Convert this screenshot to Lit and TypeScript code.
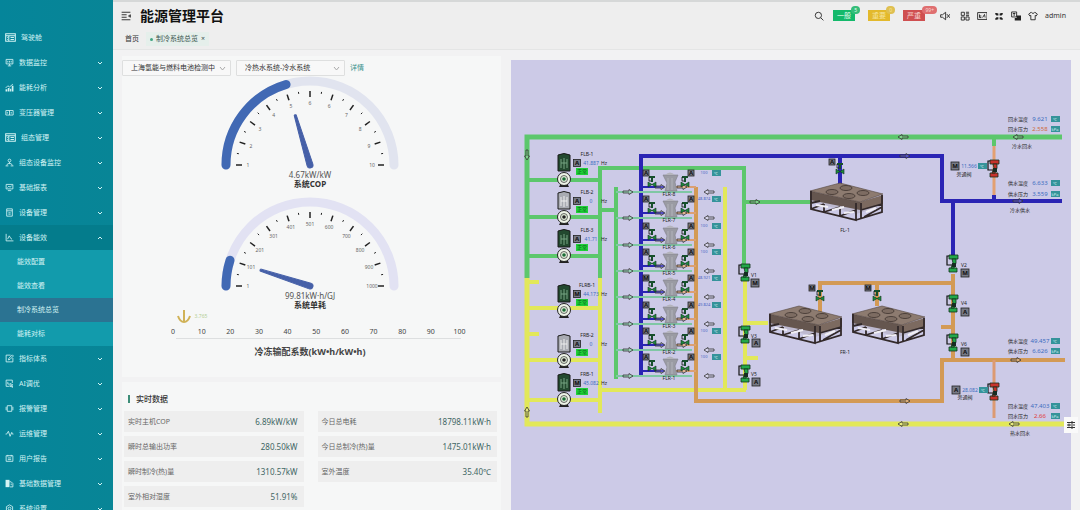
import { LitElement, html, css, svg } from "lit";
import { customElement } from "lit/decorators.js";
import { classMap } from "lit/directives/class-map.js";

type Glyph = ReturnType<typeof svg>;

const ICONS: Record<string, Glyph> = {
  board: svg`<path d="M1 2.5h14v11H1z M1 5.5h14 M5.5 5.5v8 M8 8h5 M8 11h5 M3 8h1 M3 11h1"/>`,
  monitor: svg`<path d="M2 2.5h12v8H2z M8 10.5v3 M5 14h6 M5 5v3 M8 5v3 M11 5v3"/>`,
  trend: svg`<path d="M1 9l4-4 3 2 6-5" /><path class="solid" d="M1 11h3v4H1z M5 9h3v6H5z M9 10h2v5H9z M12 5h3v10h-3z"/>`,
  box: svg`<path d="M1.5 4.5h13v8h-13z M8 4.5v8 M4 7v3 M11 7v3"/>`,
  nodes: svg`<path d="M8 2a2.5 2.5 0 1 1 0 5a2.5 2.5 0 1 1 0-5 M8 7v3 M3 13l2-3h6l2 3 M1 14h5 M10 14h5"/>`,
  report: svg`<path d="M2 2.5h12v8H2z M5 13.5h6 M4.5 8l2.5-2.5 2 2 3-3"/>`,
  device: svg`<path d="M3 1.5h10v13H3z M3 5h10 M6 8.5h4 M6 11h4"/>`,
  chart: svg`<path d="M2 1.5v12.5h13 M4.5 11l3-6 3 5 2 1"/>`,
  edit: svg`<path d="M14 7v7H2V2h8 M6 10.5l1-3L13 1.5l2 2L9 9.5z"/>`,
  tune: svg`<path d="M2 2h11v5 M2 2v11h5 M5 5v4h3 M9 8l5 2.5-2.5 1L14 14l-1.5 1-2-3L9 14z"/>`,
  alarm: svg`<path d="M4 3h8v10H4z M2 5v6 M14 5v6"/>`,
  pulse: svg`<path d="M1 9h2l3-5 3 9 3-7 1 3h2"/>`,
  user: svg`<path d="M2 3h12v10H2z M5 1.5v3 M11 1.5v3 M5 7h6 M5 10h6"/>`,
  data: svg`<path class="solid" d="M1 1.5h7v13H1z"/><path d="M8 5h3l3 3v6H9 M11 8v3"/>`,
  gear: svg`<path d="M8 1.5l5.5 3.2v6.5L8 14.5 2.5 11.2V4.7z M8 5.5a2.5 2.5 0 1 1 0 5a2.5 2.5 0 1 1 0-5"/>`,
  search: svg`<path d="M7 2a5 5 0 1 1 0 10a5 5 0 1 1 0-10 M11 11l4 4"/>`,
  mute: svg`<path d="M1 6v4h3l5 4V2L4 6z M11 5l5 6 M16 5l-5 6"/>`,
  qr: svg`<path d="M2 2h5v5H2z M2 9.5h5v5H2z M9.5 9.5h5v5h-5z M9.5 2h5 M9.5 4.5h5 M9.5 7h5"/>`,
  media: svg`<path d="M1 2.5h15v11H1z M4 5.5v5h3 M4 8h3 M9 10.5l3-5 1 5"/>`,
  full: svg`<path class="solid" d="M2 3h2l3 1v3H4L2 5z M14 3h-2L9 4v3h3l2-2z M2 14h2l3-1v-3H4l-2 2z M14 14h-2l-3-1v-3h3l2 2z"/>`,
  lang: svg`<path d="M1 1.5h8v8H1z M3 4h4 M5 3v5"/><path class="solid" d="M9 7h7v8H6v-4h3z"/>`,
  shirt: svg`<path d="M5 2l-4 3 2 3 1.5-1V14h7V7L13 8l2-3-4-3-1.5 1.5h-3z"/>`,
};

const icon = (name: string) =>
  html`<svg class="icon" viewBox="0 0 16 16" aria-hidden="true">${ICONS[name]}</svg>`;

interface MenuItem {
  icon: string;
  text: string;
  leaf?: boolean;
  children?: string[];
}

const MENU: MenuItem[] = [
  { icon: "board", text: "驾驶舱", leaf: true },
  { icon: "monitor", text: "数据监控" },
  { icon: "trend", text: "能耗分析" },
  { icon: "box", text: "变压器管理" },
  { icon: "board", text: "组态管理" },
  { icon: "nodes", text: "组态设备监控" },
  { icon: "report", text: "基础报表" },
  { icon: "device", text: "设备管理" },
  { icon: "chart", text: "设备能效", children: ["能效配置", "能效查看", "制冷系统总览", "能耗对标"] },
  { icon: "edit", text: "指标体系" },
  { icon: "tune", text: "AI调优" },
  { icon: "alarm", text: "报警管理" },
  { icon: "pulse", text: "运维管理" },
  { icon: "user", text: "用户报告" },
  { icon: "data", text: "基础数据管理" },
  { icon: "gear", text: "系统设置" },
];

const fontStack = css`"Noto Sans", "Noto Sans CJK SC", sans-serif`;

@customElement("side-menu")
class SideMenu extends LitElement {
  static styles = css`
    :host { display: block; background: linear-gradient(90deg, #05859a, #088596); overflow: hidden; padding-top: 25px; color: #d3f3f4; font: 7px/10px ${fontStack}; }
    ul { list-style: none; margin: 0; padding: 0; }
    button { display: flex; align-items: center; gap: 5px; width: 100%; height: 25px; padding: 0 10px 0 5px; border: 0; background: none; color: inherit; font: inherit; text-align: left; }
    .open { background: #047c8c; }
    .text { flex: 1; }
    .icon { width: 9px; height: 9px; fill: none; stroke: currentColor; stroke-width: 1.5; }
    .wide .icon { width: 11px; height: 11px; }
    .solid { fill: currentColor; stroke: none; }
    .chev { width: 6px; height: 4px; fill: none; stroke: currentColor; stroke-width: 1; }
    .sub { background: #129bac; }
    a { display: flex; align-items: center; height: 24px; padding-left: 17px; color: inherit; text-decoration: none; }
    .current { background: #2b7392; }
  `;

  render() {
    return html`<nav><ul>
      ${MENU.map((m) => html`<li>
        <button class=${classMap({ open: !!m.children, wide: m.icon === "board" })}>
          ${icon(m.icon)}<span class="text">${m.text}</span>
          ${m.leaf ? "" : html`<svg class="chev" viewBox="0 0 6 4"><path d=${m.children ? "M1 3l2-2 2 2" : "M1 1l2 2 2-2"} /></svg>`}
        </button>
        ${m.children ? html`<ul class="sub">${m.children.map((c) => html`<li><a href="#" class=${classMap({ current: c === "制冷系统总览" })}>${c}</a></li>`)}</ul>` : ""}
      </li>`)}
    </ul></nav>`;
  }
}

@customElement("top-bar")
class TopBar extends LitElement {
  static styles = css`
    :host { display: block; background: #eeeeee; border-top: 2px solid #d6d8d8; border-bottom: 1px solid #e4e5e5; font: 7px/10px ${fontStack}; color: #333; }
    .bar { display: flex; align-items: center; height: 27px; padding: 0 14px 0 8px; }
    h1 { margin: 0 auto 0 9px; font-size: 14px; line-height: 20px; font-weight: 700; color: #111; }
    .tools { display: flex; align-items: center; gap: 7px; }
    button { display: block; padding: 0; border: 0; background: none; color: #222; font: inherit; }
    .icon { display: block; width: 10px; height: 10px; fill: none; stroke: currentColor; stroke-width: 1.4; }
    .solid { fill: currentColor; stroke: none; }
    .level { position: relative; width: 22px; height: 11px; color: #e9fff2; text-align: center; background: #14b96b; margin-right: 6px; }
    .search { margin-right: 2px; }
    .mute { margin-right: 3px; }
    .warn { background: #e3b92c; color: #f6e49d; }
    .bad { background: #cf4f50; color: #f8d5d0; margin-right: 8px; }
    .count { position: absolute; right: -5px; top: -4px; min-width: 9px; box-sizing: border-box; height: 8px; padding: 0 2px; border-radius: 4px; background: #35bd78; font-size: 5px; line-height: 8px; }
    .warn .count { background: #dfc051; }
    .bad .count { background: #df6f70; right: -12px; padding: 0 3px; }
    .tabs { display: flex; align-items: center; gap: 3px; height: 20px; padding-left: 8px; }
    .tab { padding: 0 4px; height: 14px; line-height: 14px; }
    .tab.on { display: flex; align-items: center; gap: 3px; background: #e5efeb; color: #3c5750; }
    .dot { width: 3px; height: 3px; border-radius: 50%; background: #42a583; }
  `;

  render() {
    return html`
      <div class="bar">
        <button aria-label="折叠菜单"><svg class="icon" viewBox="0 0 16 16"><path d="M1 2h14 M1 6h8 M1 10h8 M1 14h14 M15 6l-3 2 3 2z" /></svg></button>
        <h1>能源管理平台</h1>
        <div class="tools">
          <button class="search" aria-label="搜索">${icon("search")}</button>
          <button class="level">一般<span class="count">5</span></button>
          <button class="level warn">重要<span class="count">0</span></button>
          <button class="level bad">严重<span class="count">99+</span></button>
          ${["mute", "qr", "media", "full", "lang", "shirt"].map((n) => html`<button class=${n} aria-label=${n}>${icon(n)}</button>`)}
          <span>admin</span>
        </div>
      </div>
      <div class="tabs"><span class="tab">首页</span><span class="tab on"><i class="dot"></i>制冷系统总览<span>×</span></span></div>`;
  }
}

const polar = (r: number, deg: number) => {
  const a = (deg * Math.PI) / 180;
  return [-r * Math.cos(a), -r * Math.sin(a)];
};

const gauge = (ratio: number, labels: string[], value: string, name: string, track: string) => {
  const end = polar(84, ratio * 180);
  return html`<svg class="gauge" viewBox="0 0 379 113" role="img" aria-label=${name}>
    <g transform="translate(188 89)">
      <path d="M-84 0A84 84 0 0 1 84 0" fill="none" stroke=${track} stroke-width="9" stroke-linecap="round" />
      <path d="M-84 0A84 84 0 0 1 ${end[0]} ${end[1]}" fill="none" stroke="#4169b4" stroke-width="9" stroke-linecap="round" />
      ${Array.from({ length: 21 }, (_, i) => {
        const major = i % 2 === 0;
        const a = polar(74, i * 9);
        const b = polar(major ? 68 : 72, i * 9);
        return svg`<line x1=${a[0]} y1=${a[1]} x2=${b[0]} y2=${b[1]} stroke="#222" stroke-width=${major ? 1.5 : 1} />`;
      })}
      ${labels.map((l, i) => {
        const p = polar(62, i * 18);
        return svg`<text class="tick" x=${p[0]} y=${p[1] + 2}>${l}</text>`;
      })}
      <path transform="rotate(${ratio * 180 - 90})" d="M-3 0L-1 -52Q0 -53 1 -52L3 0A3 3 0 0 1 -3 0z" fill="#4660a8" stroke="#4660a8" />
      <text class="value" x="0" y="13">${value}</text>
      <text class="name" x="0" y="22">${name}</text>
    </g>
  </svg>`;
};

const METRICS = [
  ["实时主机COP", "6.89kW/kW"], ["今日总电耗", "18798.11kW·h"],
  ["瞬时总输出功率", "280.50kW"], ["今日总制冷(热)量", "1475.01kW·h"],
  ["瞬时制冷(热)量", "1310.57kW"], ["室外温度", "35.40℃"],
  ["室外相对湿度", "51.91%"],
];

@customElement("energy-panel")
class EnergyPanel extends LitElement {
  static styles = css`
    :host { display: flex; flex-direction: column; gap: 5px; font: 7px/10px ${fontStack}; color: #444; }
    .card { background: #f6f7f7; }
    .charts { padding: 4px 0 10px; }
    .filters { display: flex; align-items: center; gap: 5px; }
    .pick { position: relative; flex: 0 0 109px; }
    select { display: block; width: 100%; height: 16px; padding: 0 14px 0 8px; appearance: none; border: 1px solid #dedfdf; border-radius: 1px; background: #f8f8f8; color: #333; font: inherit; }
    .chev { position: absolute; right: 5px; top: 6px; width: 7px; height: 5px; fill: none; stroke: #aaa; pointer-events: none; }
    a { color: #36918c; text-decoration: none; }
    .gauge, .axis { display: block; width: 100%; overflow: visible; }
    .gauge + .gauge { margin-top: 8px; }
    text { text-anchor: middle; }
    .tick { font-size: 5px; fill: #666; }
    .value { font-size: 8px; fill: #555; }
    .name { font-size: 8px; font-weight: 700; fill: #333; }
    .num { font-size: 7px; fill: #444; }
    .title { font-size: 9px; font-weight: 700; fill: #444; }
    .mark { font-size: 5px; fill: #b5cf95; }
    .data { flex: 1; padding: 11px 4px 0 2px; }
    h2 { margin: 2px 0 0 4px; padding-left: 6px; border-left: 2px solid #3d8d78; font-size: 8px; line-height: 8px; font-weight: 500; color: #333; }
    dl { display: grid; grid-template-columns: 1fr 1fr; gap: 4px 14px; margin: 8px 0 0; }
    .row { display: flex; justify-content: space-between; align-items: center; height: 21px; padding: 0 6px 0 4px; background: #eeeeee; color: #666; }
    dd { margin: 0; font-size: 8px; color: #3f6664; }
  `;

  private pick(id: string, text: string) {
    return html`<div class="pick"><select id=${id} aria-label=${id}><option>${text}</option></select><svg class="chev" viewBox="0 0 7 5"><path d="M1 1l2.5 3L6 1" /></svg></div>`;
  }

  render() {
    return html`
      <section class="card charts">
        <div class="filters">
          ${this.pick("站点", "上海氢能与燃料电池检测中")}
          ${this.pick("系统", "冷热水系统-冷水系统")}
          <a href="#">详情</a>
        </div>
        ${gauge(0.408, ["1", "2", "3", "4", "5", "6", "6", "7", "8", "9", "10"], "4.67kW/kW", "系统COP", "#e1e4ef")}
        ${gauge(0.099, ["1", "101", "201", "301", "401", "501", "600", "700", "800", "900", "1000"], "99.81kW·h/GJ", "系统单耗", "#e2e2f3")}
        <svg class="axis" viewBox="0 0 379 57" role="img" aria-label="冷冻输配系数">
          <path d="M62 0v12 M56 6q2 6 6 6q4 0 6-6" fill="none" stroke="#d0b257" stroke-width="2" />
          <text class="mark" x="79" y="8">3.765</text>
          ${Array.from({ length: 11 }, (_, i) => svg`<text class="num" x=${51 + i * 28.65} y="24">${i * 10}</text>`)}
          <line x1="54" y1="28.5" x2="339" y2="28.5" stroke="#dddfe0" />
          <text class="title" x="188" y="45">冷冻输配系数(kW•h/kW•h)</text>
        </svg>
      </section>
      <section class="card data">
        <h2>实时数据</h2>
        <dl>${METRICS.map(([k, v]) => html`<div class="row"><dt>${k}</dt><dd>${v}</dd></div>`)}</dl>
      </section>`;
  }
}

const GREEN = "#5cc76c", BLUE = "#2a24b4", ORANGE = "#d39a55", YELLOW = "#e2e85a";

const pipe = (points: string, color: string, w = 4) =>
  svg`<polyline points=${points} fill="none" stroke=${color} stroke-width=${w} />`;

const arrow = (x: number, y: number, turn = 0) =>
  svg`<path transform="translate(${x} ${y}) rotate(${turn})" d="M-5 -1H1V-2.5L5 0L1 2.5V1H-5z" fill="#fff" fill-opacity=".2" stroke="#333" stroke-width=".8" />`;

const flag = (x: number, y: number, t: string, s = 7) =>
  svg`<rect x=${x - s / 2} y=${y - s / 2} width=${s} height=${s} fill="#777a86" stroke="#222" stroke-width=".8" /><text class="flag" x=${x} y=${y + 2}>${t}</text>`;

const unit = (x: number, y: number, t: string) =>
  svg`<rect x=${x - 4} y=${y - 3} width="9" height="6" fill="#35939a" /><text class="unit" x=${x} y=${y + 2}>${t}</text>`;

const valve = (x: number, y: number, color = "#23a84a") => svg`<g transform="translate(${x} ${y})">
  <path d="M-4 -8H5V-4H-4z M-4 5H4V9H-4z" fill=${color} stroke="#12301c" stroke-width=".8" />
  <path d="M-1 -4H3V0L1 5H-2L0 0z" fill=${color} stroke="#12301c" stroke-width=".8" />
  <path d="M-1 0h4v4h-4z" fill="#162c22" /><path d="M-4 -7H-6V2H-1" fill="none" stroke="#111" stroke-width="1.2" /></g>`;

const smallValve = (x: number, y: number) => svg`<g transform="translate(${x} ${y})">
  <path d="M-3 -5H3V-3H-3z M-1 -3h2v4h-2z" fill="#174f2c" /><path d="M-4 1L4 6V1L-4 6z" fill="#1d8a3c" stroke="#12301c" stroke-width=".6" /><path d="M-3 -4v4h2" fill="none" stroke="#111" stroke-width=".8" /></g>`;

const pump = (y: number, name: string, mode: string, value: string, on: boolean) => svg`<g transform="translate(564 ${y})">
  <path d="M-6 -24Q0 -27 6 -24V-8H-6z" fill=${on ? "#23492f" : "#a9abb2"} stroke="#1a1a1a" />
  <path d="M-3 -20v9 M0 -21v11 M3 -20v9 M-3 -16h6" stroke=${on ? "#79a684" : "#eee"} fill="none" />
  <path d="M-5 8h10l-2-4h-6z" fill="#222" />
  <circle r="6.5" fill="#eef4e8" stroke="#222" /><circle r="3.5" fill="#e3eedb" stroke="#444" stroke-width=".8" /><circle r="1.8" fill=${on ? "#1b6c36" : "#222"} />
  <text class="tag" x="23" y="-23">${name}</text>
  ${flag(13, -16, mode, 7)}
  <text class="meter" x="27" y="-14">${value}</text><text class="tag" x="40" y="-14">Hz</text>
  <rect x="12" y="-11" width="12" height="7" fill="#1fd238" /><text class="state" x="18" y="-6">正常</text></g>`;

const tower = (y: number, n: number, mode: string, value: string) => svg`<g transform="translate(0 ${y})">
  ${pipe("616,4 692,4", "#7fc7a4", 2)}
  ${pipe("641,-1 664,-1", BLUE, 2)}${pipe("676,-1 696,-1", "#dba074", 2)}
  ${arrow(628, 4)}${arrow(709, 4, 180)}${arrow(660, -1)}${arrow(682, -1)}
  <path d="M663 -13H678L675 -6L677 3H665L667 -5z" fill="#9a9ba3" stroke="#7f8089" stroke-width=".6" /><path d="M665 -13q5-5 10 0z" fill="#b4b4bc" /><path d="M668 -10v12 M672 -10v12" stroke="#b9bac2" stroke-width=".8" />
  ${smallValve(652, -7)}${smallValve(685, -7)}
  ${flag(646, -15, mode, 6)}${flag(691, -15, "A", 6)}
  <text class="small" x="704" y="-14">${value}</text>${unit(716, -15, "℃")}
  <text class="tag" x="669" y="8">FLR-${n}</text></g>`;

const chiller = (x: number, y: number) => svg`<g transform="translate(${x} ${y})">
  <path d="M0 18L46 31L73 23L30 14z" fill="#bdb9cf" />
  <path d="M0 8L50 19V27L0 17z" fill="#65564f" /><path d="M50 19L73 12V21L50 27z" fill="#7c6a60" />
  <path d="M0 8L30 0L73 11L50 19z" fill="#8d7b70" stroke="#54463f" stroke-width=".6" />
  <g fill="#7d6c62" stroke="#4d413b" stroke-width="1"><ellipse cx="22" cy="9" rx="6" ry="2.5" /><ellipse cx="36" cy="5" rx="6" ry="2.5" /><ellipse cx="39" cy="13" rx="6" ry="2.5" /><ellipse cx="53" cy="10" rx="6" ry="2.5" /></g>
  <path d="M1 8V26L46 37V20 M46 37L72 29V12 M1 20L10 18 M14 29V21 M30 33V24 M1 26L14 21 M14 29L30 24 M30 33L46 27 M51 35V20 M51 27L72 21 M54 34L72 24" fill="none" stroke="#32292a" stroke-width="1.8" />
  <path d="M6 22l12 2 M22 27l12-3 M34 30l10-1 M56 29l10-4" stroke="#f1eff5" stroke-width="2" /></g>`;

const reading = (y: number, label: string, value: string, u: string, cls = "read") =>
  svg`<text class="label" x="1018" y=${y + 2}>${label}</text><text class=${cls} x="1040" y=${y + 2}>${value}</text>${unit(1055, y, u)}`;

@customElement("system-diagram")
class SystemDiagram extends LitElement {
  static styles = css`
    :host { display: block; background: #cccae7; font: 5px/6px ${fontStack}; }
    svg { display: block; width: 100%; overflow: visible; }
    text { text-anchor: middle; fill: #222; font-size: 5px; }
    .flag { font-weight: 700; fill: #111; font-size: 6px; }
    .read { font-size: 6px; fill: #3b6cc0; }
    .meter { fill: #3b6cc0; }
    .hot { font-size: 6px; fill: #cf6a3c; }
    .alert { font-size: 6px; fill: #e03a3a; }
    .small { font-size: 4px; fill: #4a66c4; }
    .unit { font-size: 4px; fill: #d6f2f2; }
    .state { fill: #0a5a18; }
  `;

  render() {
    const modes = ["A", "A", "A", "A", "M", "A", "A", "A"];
    const temps = ["100", "48.874", "100", "100", "48.921", "49.824", "100", "100"];
    return html`<svg viewBox="511 60 560 450" role="img" aria-label="制冷系统流程图">
      ${pipe("1062,137 527,137 527,278", GREEN, 5)}
      ${[180, 217, 256].map((y) => pipe(`527,${y} 600,${y}`, GREEN))}
      ${pipe("600,278 600,168 744,168 744,264", GREEN)}
      ${pipe("744,202 811,202", GREEN)}
      ${pipe("600,210 616,210", GREEN)}${pipe("616,187 616,379", GREEN)}
      ${pipe("641,376 641,156 942,156 942,201 1062,201", BLUE)}
      ${pipe("840,156 840,184", BLUE)}${pipe("953,201 953,256", BLUE)}
      ${pipe("527,278 527,424 1066,424", YELLOW, 5)}
      ${pipe("600,278 600,413", YELLOW)}
      ${[308, 360, 400].map((y) => pipe(`527,${y} 600,${y}`, YELLOW))}
      ${pipe("527,282 539,282", YELLOW)}${pipe("527,334 539,334", YELLOW)}
      ${pipe("600,390 746,390", YELLOW)}${pipe("725,187 725,390", YELLOW)}
      ${pipe("745,280 745,390", YELLOW)}${pipe("745,323 768,323", YELLOW)}${pipe("745,358 758,358", YELLOW)}
      ${pipe("696,187 696,401 942,401 942,360 1065,360", ORANGE)}
      ${pipe("820,315 820,283 953,283", ORANGE)}${pipe("877,283 877,306", ORANGE)}
      ${pipe("953,274 953,360", ORANGE)}${pipe("941,327 953,327", ORANGE)}
      ${pipe("994,139 994,198", "#e3a071", 3)}${pipe("994,139 994,146", GREEN)}${pipe("994,195 994,201", BLUE)}
      ${pipe("994,360 994,418", "#dc9a72", 3)}

      ${pump(179, "FLB-1", "A", "41.887", true)}
      ${pump(217, "FLB-2", "A", "0", false)}
      ${pump(255, "FLB-3", "A", "41.71", true)}
      ${pump(310, "FLRB-1", "M", "44.173", true)}
      ${pump(360, "FRB-2", "A", "0", false)}
      ${pump(399, "FRB-1", "M", "45.082", true)}

      ${modes.map((m, i) => tower(188 + Math.round(i * 26.3), 8 - i, m, temps[i]))}

      ${chiller(810, 183)}${chiller(769, 306)}${chiller(852, 306)}
      <text x="845" y="232">FL-1</text><text x="845" y="354">FR-1</text>
      ${smallValve(840, 168)}${flag(832, 162, "A", 6)}
      ${smallValve(820, 295)}${flag(812, 288, "M", 6)}
      ${smallValve(877, 295)}${flag(868, 288, "M", 6)}

      ${valve(745, 272)}<text x="754" y="277">V1</text>${flag(755, 283, "M", 8)}
      ${valve(745, 334)}<text x="754" y="338">V3</text>${flag(756, 343, "A", 8)}
      ${valve(745, 373)}<text x="754" y="376">V5</text>${flag(756, 382, "A", 8)}
      ${valve(953, 263)}<text x="964" y="267">V2</text>${flag(965, 273, "M", 8)}
      ${valve(953, 303)}<text x="964" y="305">V4</text>${flag(965, 312, "A", 8)}
      ${valve(953, 342)}<text x="964" y="346">V6</text>${flag(965, 352, "A", 8)}
      ${valve(994, 168, "#c8332c")}${valve(994, 391, "#c8332c")}

      ${flag(955, 166, "M", 8)}<text class="meter" x="969" y="168">11.566</text>${unit(982, 166, "℃")}<text x="964" y="176">旁通阀</text>
      ${flag(956, 390, "A", 8)}<text class="meter" x="970" y="392">28.082</text>${unit(983, 390, "℃")}<text x="965" y="399">旁通阀</text>

      ${reading(119, "回水温度", "9.621", "℃")}${reading(129, "回水压力", "2.558", "kPa", "hot")}
      <text x="1022" y="148">冷水回水</text>
      ${reading(183, "供水温度", "6.633", "℃")}${reading(194, "供水压力", "3.559", "kPa")}
      <text x="1020" y="212">冷水供水</text>
      ${reading(341, "供水温度", "49.457", "℃")}${reading(351, "供水压力", "6.626", "kPa")}
      ${reading(406, "回水温度", "47.403", "℃")}${reading(416, "回水压力", "2.66", "kPa", "alert")}
      <text x="1020" y="435">热水回水</text>

      ${arrow(527, 155, 90)}${arrow(527, 412, -90)}${arrow(755, 202)}
      ${arrow(903, 137, 180)}${arrow(905, 156)}${arrow(1018, 137, 180)}${arrow(1018, 201)}
      ${arrow(905, 401)}${arrow(903, 424, 180)}${arrow(1016, 360)}${arrow(1014, 424, 180)}
    </svg>`;
  }
}

@customElement("app-root")
class AppRoot extends LitElement {
  static styles = css`
    :host { display: grid; grid-template-columns: 113px minmax(0, 1fr); height: 100vh; overflow: hidden; background: #f0f0f0; }
    main { display: flex; flex-direction: column; min-width: 0; min-height: 0; }
    .content { flex: 1; min-height: 0; display: grid; grid-template-columns: 379fr 560fr; gap: 10px; padding: 6px 9px 0; background: #f2f2f3; }
    system-diagram { margin-top: 4px; }
    .settings { position: fixed; right: 2px; top: 417px; width: 14px; height: 16px; padding: 0; border: 0; background: #fafafa; display: grid; place-items: center; }
    .settings svg { width: 8px; height: 8px; fill: none; stroke: #333; }
  `;

  render() {
    return html`
      <side-menu></side-menu>
      <main>
        <top-bar></top-bar>
        <div class="content">
          <energy-panel></energy-panel>
          <system-diagram></system-diagram>
        </div>
      </main>
      <button class="settings" aria-label="设置"><svg viewBox="0 0 8 8"><path d="M0 1.5h8 M0 4h8 M0 6.5h8 M5 0v3 M2 2.5v3 M5 5v3" /></svg></button>`;
  }
}
